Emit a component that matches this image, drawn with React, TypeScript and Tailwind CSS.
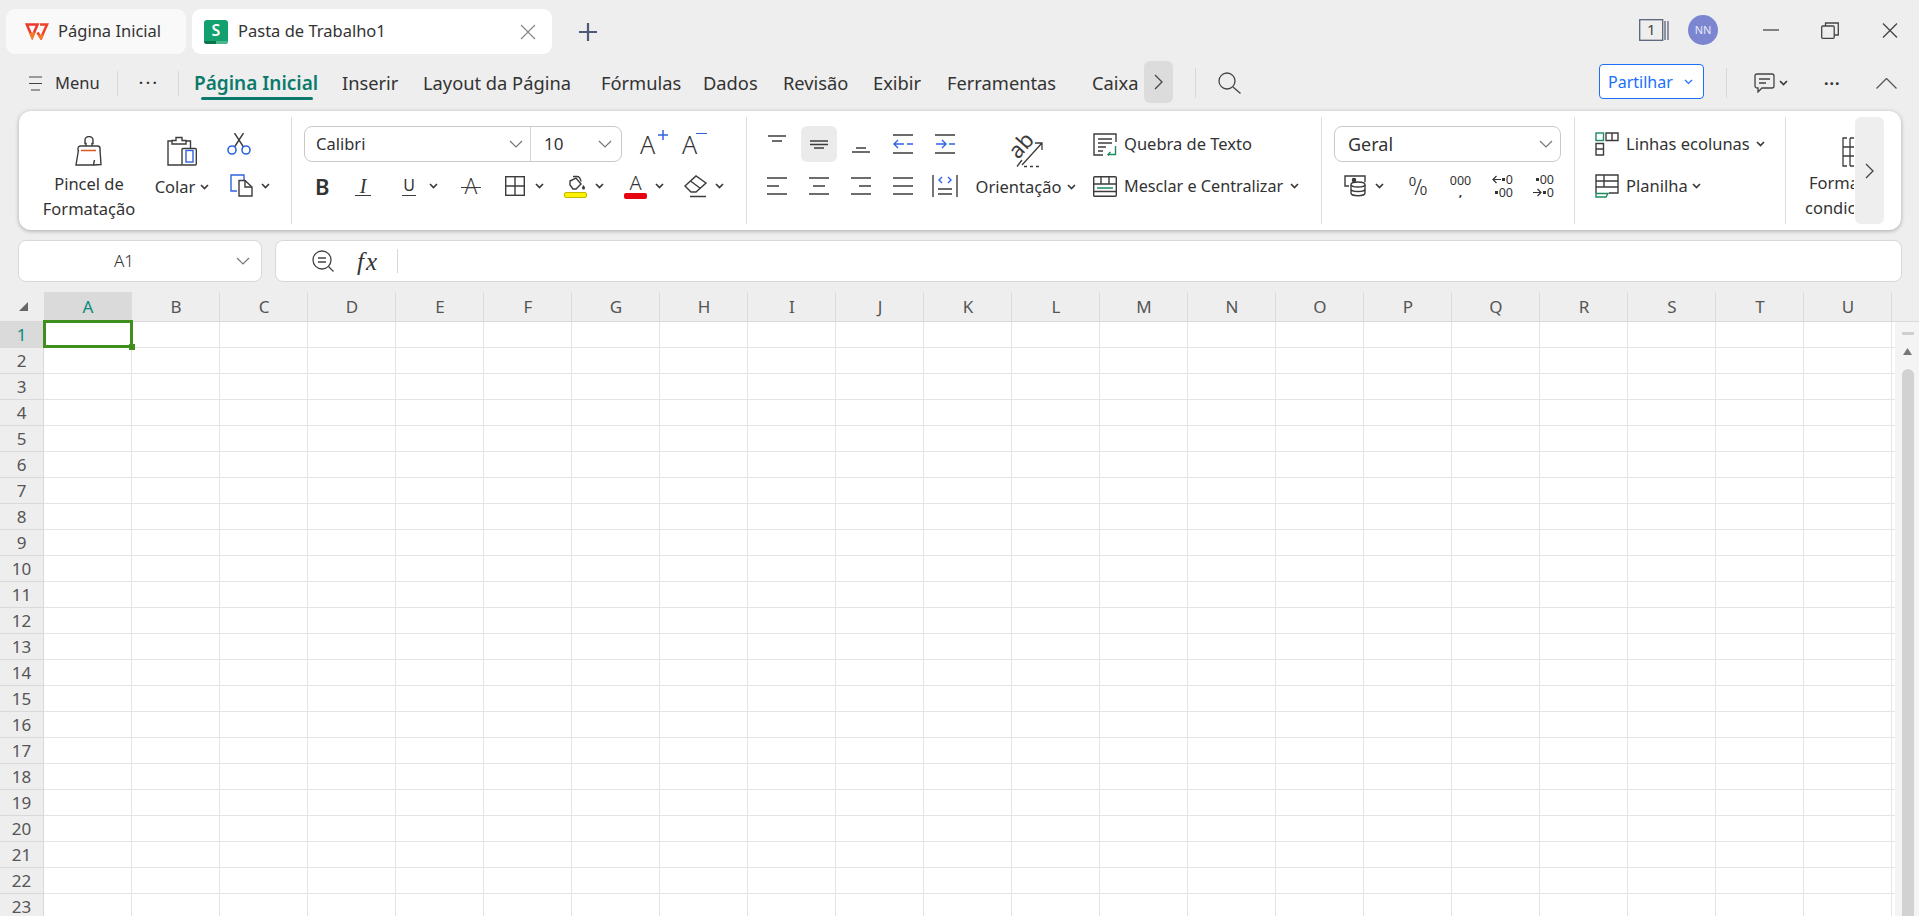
const COLS = "ABCDEFGHIJKLMNOPQRSTUV".split("");
const ROWS = Array.from({ length: 23 }, (_, i) => i + 1);

const TABS = [
  { label: "Página Inicial", w: "w-[148px]", active: true },
  { label: "Inserir", w: "w-[81px]" },
  { label: "Layout da Página", w: "w-[178px]" },
  { label: "Fórmulas", w: "w-[102px]" },
  { label: "Dados", w: "w-[80px]" },
  { label: "Revisão", w: "w-[90px]" },
  { label: "Exibir", w: "w-[74px]" },
  { label: "Ferramentas", w: "w-[145px]" },
  { label: "Caixa", w: "w-[50px]" },
];

const Caret = ({ className = "" }: { className?: string }) => (
  <svg width="9" height="6" viewBox="0 0 9 6" className={`shrink-0 ${className}`} fill="none">
    <path d="M1 1l3.5 3.5L8 1" stroke="#3a3a3a" strokeWidth="1.7" />
  </svg>
);

const ThinChevron = ({ className = "" }: { className?: string }) => (
  <svg width="14" height="8" viewBox="0 0 14 8" className={`shrink-0 ${className}`} fill="none">
    <path d="M1 1l6 6 6-6" stroke="#777" strokeWidth="1.2" />
  </svg>
);

const Sep = () => <div className="h-[107px] w-px shrink-0 bg-[#dedede]" />;

const Lines = ({ rows }: { rows: number[][] }) => (
  <svg width="20" height="20" viewBox="0 0 20 20" fill="none">
    {rows.map(([a, b, y]) => (
      <path key={`${a}${y}`} d={`M${a} ${y}H${b}`} stroke="#3c3c3c" strokeWidth="1.4" />
    ))}
  </svg>
);

const Slot = ({ children, on = false }: { children?: React.ReactNode; on?: boolean }) => (
  <div className={`flex h-[36px] w-[36px] items-center justify-center rounded-[6px] ${on ? "bg-[#ebebeb]" : ""}`}>
    {children}
  </div>
);

const Dot = () => <span className="mx-[1px] inline-block h-[3px] w-[3px] bg-[#333]" />;

const WpsLogo = () => (
  <svg width="24" height="17" viewBox="0 0 24 17" fill="none" strokeWidth="2.6" strokeLinejoin="miter">
    <path d="M1.800 1.500H12.500L7.200 14z" stroke="#ee3a2c" />
    <path d="M12.500 9.500l3.500 5.500 6-13.500h-7" stroke="#f0432a" />
    <path d="M5.500 10l1.700 4 2-4.500M14 12l2 3 1.500-3.500" stroke="#f77a22" />
  </svg>
);

const SheetLogo = () => (
  <div className="relative flex h-[24px] w-[24px] items-start justify-center overflow-hidden rounded-[3px] bg-[#12a06e]">
    <span className="text-[16px] font-semibold leading-[21px] text-white">S</span>
    <div className="absolute bottom-0 left-0 h-[3px] w-[12px] bg-[#0c7548]" />
    <div className="absolute bottom-0 right-0 h-[3px] w-[12px] bg-[#4ab78d]" />
  </div>
);

const BrushIcon = () => (
  <svg width="28" height="30" viewBox="0 0 28 30" fill="none" stroke="#3c3c3c" strokeWidth="1.4">
    <path d="M11 10V7.500H10V4a4 3.500 0 0 1 8 0v3.500h-1V10" />
    <path d="M3 14.500V12.500a2.500 2.500 0 0 1 2.500-2.500h17a2.500 2.500 0 0 1 2.500 2.500v2" />
    <path d="M6 14.500h15" stroke="#d9581f" strokeWidth="1.500" />
    <path d="M3.500 14L1 29h17.500l1-5" />
    <path d="M25 14l1 14.500-7.500.5" />
  </svg>
);

const PasteIcon = () => (
  <svg width="30" height="30" viewBox="0 0 30 30" fill="none" stroke="#3c3c3c" strokeWidth="1.4">
    <path d="M5 5H1v24h14" />
    <path d="M5 8V4.500h4V1.500h6v3h4V8z" />
    <path d="M19 5h4.500v7" />
    <rect x="15" y="12.500" width="14.300" height="16.500" rx="1" />
    <rect x="19" y="14.500" width="7" height="11.500" stroke="#2f63e0" />
  </svg>
);

const CutIcon = () => (
  <svg width="24" height="22" viewBox="0 0 24 22" fill="none" stroke="#3c3c3c" strokeWidth="1.4">
    <path d="M7.500 14L16.500 0M16.500 14L7.500 0" />
    <circle cx="5" cy="17" r="4" stroke="#2f63e0" strokeWidth="1.600" />
    <circle cx="19" cy="17" r="4" stroke="#2f63e0" strokeWidth="1.600" />
  </svg>
);

const CopyIcon = () => (
  <svg width="24" height="23" viewBox="0 0 24 23" fill="none" strokeWidth="1.4">
    <path d="M7 17H1V1h13v5" stroke="#2f63e0" />
    <path d="M9 6.500h6l7 6.500v9H9z" stroke="#3c3c3c" />
    <path d="M15 6.500V13h7" stroke="#3c3c3c" />
  </svg>
);

const BordersIcon = () => (
  <svg width="20" height="20" viewBox="0 0 20 20" fill="none" stroke="#3c3c3c" strokeWidth="1.4">
    <rect x="0.700" y="0.700" width="18.600" height="18.600" />
    <path d="M10 1v18M1 10h18" />
  </svg>
);

const FillIcon = () => (
  <div className="flex w-[23px] flex-col items-center">
    <svg width="20" height="16" viewBox="0 0 20 16" fill="none" stroke="#3c3c3c" strokeWidth="1.4">
      <path d="M4 6l6-3 5 6-5 5-3 0-3-4z" />
      <path d="M7 1.500h4c2 0 3.500 2 4 5" />
      <path d="M17.500 10c-1 1.500-1.500 2-1.500 3a1.500 1.500 0 0 0 3 0c0-1-.5-1.500-1.500-3z" fill="#3c3c3c" stroke="none" />
    </svg>
    <div className="mt-[1px] h-[6px] w-[23px] rounded-[2px] border border-[#c4b700] bg-[#fff200]" />
  </div>
);

const EraserIcon = () => (
  <svg width="24" height="23" viewBox="0 0 24 23" fill="none" stroke="#3c3c3c" strokeWidth="1.4">
    <path d="M1 11L12 1l10 7-10 9H7z" />
    <path d="M6.500 6l10 7.500" />
    <path d="M6 21.500h16" />
  </svg>
);

const OrientIcon = () => (
  <svg width="34" height="32" viewBox="0 0 34 32" fill="none" className="overflow-visible">
    <text fontSize="22" fill="#3c3c3c" transform="translate(9 25) rotate(-48)" fontFamily="Noto Sans">
      ab
    </text>
    <path d="M13 30L33 8M26 8h7v7" stroke="#3c3c3c" strokeWidth="1.300" />
    <path d="M8 31.500L13 25M15 31.500h3M21 31.500h3M27 31.500h3" stroke="#3c3c3c" strokeWidth="1.300" />
  </svg>
);

const WrapIcon = () => (
  <svg width="24" height="23" viewBox="0 0 24 23" fill="none" stroke="#3c3c3c" strokeWidth="1.4">
    <path d="M23 9V1H1v21h9" />
    <path d="M5 6h14M5 10h14M5 14h8M5 18h5" />
    <path d="M22.500 13v8.500H15M17.500 19L15 21.500l1 1" stroke="#1f8a5f" />
  </svg>
);

const MergeIcon = () => (
  <svg width="24" height="21" viewBox="0 0 24 21" fill="none" stroke="#3c3c3c" strokeWidth="1.4">
    <rect x="0.700" y="0.700" width="22.600" height="19.600" rx="1" />
    <path d="M1 8h22M8 1v7M16 1v7M1 15.500h22" />
    <path d="M4 12h16" stroke="#1f8a5f" strokeWidth="1.500" />
  </svg>
);

const MoneyIcon = () => (
  <svg width="22" height="22" viewBox="0 0 22 22" fill="none" stroke="#3c3c3c" strokeWidth="1.4">
    <path d="M5 11H1V1h20v6" />
    <circle cx="10" cy="5" r="1.600" fill="#3c3c3c" />
    <ellipse cx="14" cy="9.500" rx="7" ry="2.500" />
    <path d="M7 10v8c0 1.500 3 2.800 7 2.800s7-1.300 7-2.800v-8M7 14c0 1.500 3 2.500 7 2.500s7-1 7-2.500" />
  </svg>
);

const RowsIcon = () => (
  <svg width="24" height="24" viewBox="0 0 24 24" fill="none" stroke="#3c3c3c" strokeWidth="1.4">
    <rect x="1" y="1" width="7.500" height="7.500" stroke="#1f8a5f" />
    <path d="M11 1h12v7.500H11zM17 1v7.500" />
    <path d="M1 11.500h7.500V23H1zM1 17h7.500" />
  </svg>
);

const SheetIcon = () => (
  <svg width="24" height="24" viewBox="0 0 24 24" fill="none" stroke="#3c3c3c" strokeWidth="1.4">
    <path d="M1 19V1h22v18h-9" />
    <path d="M1 7h22M9 1v12M1 13h22" />
    <path d="M1 19.500h12l-2 3.500H1z" stroke="#1f8a5f" />
  </svg>
);

const CondIcon = () => (
  <svg width="24" height="30" viewBox="0 0 24 30" fill="none" stroke="#3c3c3c" strokeWidth="1.300">
    <path d="M5 1H1v28h4M8 1v28M8 1h4M8 29h4M1 10h11M1 19h11" />
  </svg>
);

const Cells = () => (
  <>
    {COLS.map((c) => (
      <div key={c} className="h-full w-[88px] shrink-0 border-r border-b border-[#e4e4e4]" />
    ))}
  </>
);

export default function App() {
  return (
    <div className="flex h-screen w-full flex-col overflow-hidden bg-[#eeeeee] font-['Noto_Sans',sans-serif] text-[16.5px] text-[#333]">
      {/* title bar */}
      <div className="flex h-[60px] shrink-0 pt-[9px]">
        <div className="ml-[6px] flex h-[45px] w-[180px] items-center rounded-[9px] bg-[#f9f9f9] pl-[19px]">
          <WpsLogo />
          <span className="ml-[9px]">Página Inicial</span>
        </div>
        <div className="ml-[6px] flex h-[45px] w-[360px] items-center rounded-[9px] bg-white pl-[12px]">
          <SheetLogo />
          <span className="ml-[10px]">Pasta de Trabalho1</span>
          <svg width="16" height="16" viewBox="0 0 16 16" className="ml-auto mr-[16px]" fill="none" stroke="#888" strokeWidth="1.2">
            <path d="M1 1l14 14M15 1L1 15" />
          </svg>
        </div>
        <svg width="20" height="20" viewBox="0 0 20 20" className="ml-[26px] mt-[13px]" fill="none" stroke="#4b5a78" strokeWidth="2.2">
          <path d="M10 1v18M1 10h18" />
        </svg>
        <div className="ml-auto flex h-[45px] items-start">
          <svg width="30" height="22" viewBox="0 0 30 22" className="mt-[10px]" fill="none" stroke="#5a6478" strokeWidth="1.3">
            <rect x="0.700" y="0.700" width="23" height="20.600" />
            <path d="M26 2v19M29 2v19" />
            <text x="8" y="16" fontSize="15" fill="#444" stroke="none" fontFamily="Noto Sans">
              1
            </text>
          </svg>
          <div className="ml-[19px] mt-[6px] flex h-[30px] w-[30px] items-center justify-center rounded-full bg-[#7c86d0] text-[11px] text-[#e6e8f8]">
            NN
          </div>
          <svg width="16" height="2" viewBox="0 0 16 2" className="ml-[45px] mt-[19.500px]" stroke="#444" strokeWidth="1.300">
            <path d="M0 1h16" />
          </svg>
          <svg width="18" height="17" viewBox="0 0 18 17" className="ml-[42px] mt-[13px]" fill="none" stroke="#444" strokeWidth="1.300">
            <rect x="0.700" y="4" width="12.500" height="12.300" rx="1" />
            <path d="M4.500 4V1h12.800v12H13" />
          </svg>
          <svg width="16" height="15" viewBox="0 0 16 15" className="ml-[43px] mr-[21px] mt-[14px]" fill="none" stroke="#444" strokeWidth="1.300">
            <path d="M1 0.500l14 14M15 0.500l-14 14" />
          </svg>
        </div>
      </div>

      {/* tab bar */}
      <div className="mb-[5px] flex h-[46px] shrink-0 items-center">
        <svg width="13" height="15" viewBox="0 0 13 15" className="ml-[29px]" fill="none" stroke="#444" strokeWidth="1.200">
          <path d="M0 1h13M0 7.500h13M2 14h9" />
        </svg>
        <span className="ml-[13px] w-[62px]">Menu</span>
        <div className="h-[25px] w-px bg-[#d8d8d8]" />
        <span className="ml-[21px] w-[39px] text-[14px] font-bold leading-none tracking-[3px]">···</span>
        <div className="h-[25px] w-px bg-[#d8d8d8]" />
        <div className="ml-[15px] flex items-center">
          {TABS.map((t) => (
            <div key={t.label} className={`relative shrink-0 whitespace-nowrap ${t.w}`}>
              <span className={t.active ? "text-[19px] font-semibold text-[#0b7a6c]" : "text-[18.300px]"}>{t.label}</span>
              {t.active && <div className="absolute left-[7px] top-[28px] h-[3px] w-[112px] rounded-full bg-[#0b7a6c]" />}
            </div>
          ))}
        </div>
        <div className="-mt-[2px] ml-[2px] flex h-[42px] w-[29px] items-center justify-center rounded-[6px] bg-[#dcdcdc]">
          <svg width="9" height="16" viewBox="0 0 9 16" fill="none" stroke="#444" strokeWidth="1.300">
            <path d="M1 1l7 7-7 7" />
          </svg>
        </div>
        <div className="ml-[22px] h-[30px] w-px bg-[#d8d8d8]" />
        <svg width="23" height="22" viewBox="0 0 23 22" className="ml-[22px]" fill="none" stroke="#444" strokeWidth="1.300">
          <circle cx="9" cy="9" r="8" />
          <path d="M15 15l7.500 6.500" />
        </svg>
        <div className="ml-auto flex items-center">
          <div className="-mt-[3px] flex h-[35px] w-[105px] items-center rounded-[4px] border border-[#1a6fff] bg-white pl-[8px] text-[16px] text-[#1a6fff]">
            <span>Partilhar</span>
            <svg width="9" height="6" viewBox="0 0 9 6" className="ml-[11px]" fill="none" stroke="#1a6fff" strokeWidth="1.200">
              <path d="M1 1l3.500 3.500L8 1" />
            </svg>
          </div>
          <div className="ml-[22px] h-[30px] w-px bg-[#d8d8d8]" />
          <svg width="21" height="20" viewBox="0 0 21 20" className="ml-[27px]" fill="none" stroke="#444" strokeWidth="1.300">
            <path d="M3 1h15a2 2 0 0 1 2 2v10a2 2 0 0 1-2 2H8l-4 4v-4H3a2 2 0 0 1-2-2V3a2 2 0 0 1 2-2z" />
            <path d="M5 6h11M5 10h7" />
          </svg>
          <Caret className="ml-[4px]" />
          <span className="ml-[36px] w-[19px] whitespace-nowrap text-[16px] font-bold leading-none tracking-[1px]">···</span>
          <svg width="21" height="11" viewBox="0 0 21 11" className="ml-[33px] mr-[22px]" fill="none" stroke="#555" strokeWidth="1.300">
            <path d="M0.500 10.500l10-10 10 10" />
          </svg>
        </div>
      </div>

      {/* ribbon */}
      <div className="relative ml-[19px] mr-[18px] flex h-[119px] shrink-0 overflow-hidden rounded-[12px] bg-white pt-[6px] shadow-[0_1px_4px_rgba(0,0,0,0.3)]">
        {/* clipboard */}
        <div className="flex h-[107px] w-[272px] shrink-0">
          <div className="ml-[21px] flex w-[98px] flex-col items-center pt-[19px]">
            <BrushIcon />
            <span className="mt-[5px] whitespace-nowrap leading-[25px]">Pincel de</span>
            <span className="whitespace-nowrap leading-[25px]">Formatação</span>
          </div>
          <div className="ml-[12px] flex w-[64px] flex-col items-center pt-[19px]">
            <PasteIcon />
            <div className="mt-[8px] flex items-center gap-[5px] leading-[25px]">
              Colar <Caret />
            </div>
          </div>
          <div className="ml-[13px] w-[44px] pt-[16px]">
            <CutIcon />
            <div className="ml-[3px] mt-[19px] flex items-center gap-[7px]">
              <CopyIcon />
              <Caret />
            </div>
          </div>
        </div>
        <Sep />

        {/* font */}
        <div className="h-[107px] w-[454px] shrink-0 pt-[9px]">
          <div className="flex h-[36px] items-center">
            <div className="ml-[12px] flex h-[36px] w-[318px] rounded-[8px] border border-[#c9c9c9]">
              <div className="flex w-[226px] items-center border-r border-[#d5d5d5] pl-[11px] pr-[7px]">
                Calibri
                <ThinChevron className="ml-auto" />
              </div>
              <div className="flex flex-1 items-center pl-[13px] pr-[9px] text-[17px]">
                10
                <ThinChevron className="ml-auto" />
              </div>
            </div>
            <div className="relative ml-[18px] w-[22px] text-[25px] font-light leading-none">
              A
              <svg width="10" height="10" viewBox="0 0 10 10" className="absolute -right-[6px] -top-[2px]" stroke="#2f63e0" strokeWidth="1.500">
                <path d="M5 0v10M0 5h10" />
              </svg>
            </div>
            <div className="relative ml-[20px] w-[22px] text-[25px] font-light leading-none">
              A
              <div className="absolute -right-[3px] top-[1px] h-[1.500px] w-[11px] bg-[#2f63e0]" />
            </div>
          </div>
          <div className="mt-[6px] flex h-[36px] items-center">
            <span className="ml-[23px] w-[14px] text-center text-[22px] font-semibold leading-none">B</span>
            <span className="ml-[26px] w-[16px] border-b border-[#3c3c3c] text-center font-['Liberation_Serif',serif] text-[20px] italic leading-[18px]">I</span>
            <span className="ml-[31px] w-[14px] border-b border-[#3c3c3c] text-center text-[16px] leading-[19px]">U</span>
            <Caret className="ml-[13px]" />
            <span className="relative ml-[23px] w-[20px] text-center text-[21px] font-light leading-none">
              A
              <span className="absolute left-0 top-[11px] h-px w-[20px] bg-[#3c3c3c]" />
            </span>
            <span className="ml-[24px] w-[20px]">
              <BordersIcon />
            </span>
            <Caret className="ml-[10px]" />
            <span className="ml-[20px] w-[23px]">
              <FillIcon />
            </span>
            <Caret className="ml-[8px]" />
            <div className="ml-[20px] flex w-[23px] flex-col items-center">
              <span className="text-[20px] font-light leading-[18px]">A</span>
              <div className="mt-[1px] h-[6px] w-[23px] rounded-[2px] bg-[#e8040f]" />
            </div>
            <Caret className="ml-[8px]" />
            <span className="ml-[20px] w-[23px]">
              <EraserIcon />
            </span>
            <Caret className="ml-[8px]" />
          </div>
        </div>
        <Sep />

        {/* alignment */}
        <div className="flex h-[107px] w-[574px] shrink-0">
          <div className="ml-[12px] grid w-[204px] shrink-0 grid-cols-5 content-start gap-[6px] pt-[9px]">
            <Slot>
              <Lines rows={[[1, 19, 2], [5, 15, 7]]} />
            </Slot>
            <Slot on>
              <Lines rows={[[1, 19, 7], [1, 19, 10.5], [5, 15, 14]]} />
            </Slot>
            <Slot>
              <Lines rows={[[5, 15, 14], [1, 19, 18]]} />
            </Slot>
            <Slot>
              <svg width="20" height="20" viewBox="0 0 20 20" fill="none" stroke="#3c3c3c" strokeWidth="1.4">
                <path d="M0 1h20M0 19h20" />
                <path d="M1 10h10M5 6l-4 4 4 4M14 10h6" stroke="#2f63e0" />
              </svg>
            </Slot>
            <Slot>
              <svg width="20" height="20" viewBox="0 0 20 20" fill="none" stroke="#3c3c3c" strokeWidth="1.4">
                <path d="M0 1h20M0 19h20" />
                <path d="M1 10h10M7 6l4 4-4 4M14 10h6" stroke="#2f63e0" />
              </svg>
            </Slot>
            <Slot>
              <Lines rows={[[0, 20, 2], [0, 12, 10], [0, 20, 18]]} />
            </Slot>
            <Slot>
              <Lines rows={[[0, 20, 2], [4, 16, 10], [0, 20, 18]]} />
            </Slot>
            <Slot>
              <Lines rows={[[0, 20, 2], [8, 20, 10], [0, 20, 18]]} />
            </Slot>
            <Slot>
              <Lines rows={[[0, 20, 2], [0, 20, 10], [0, 20, 18]]} />
            </Slot>
            <Slot>
              <svg width="26" height="22" viewBox="0 0 26 22" fill="none" stroke="#3c3c3c" strokeWidth="1.4">
                <path d="M1 0v22M25 0v22M6 14h14M6 19h14" />
                <path d="M10 2L7 5l3 3M16 2l3 3-3 3" stroke="#2f63e0" />
              </svg>
            </Slot>
          </div>
          <div className="ml-[7px] flex w-[112px] shrink-0 flex-col items-center pt-[18px]">
            <OrientIcon />
            <div className="mt-[7px] flex items-center gap-[6px] whitespace-nowrap leading-[25px]">
              Orientação <Caret />
            </div>
          </div>
          <div className="ml-[11px] pt-[9px]">
            <div className="flex h-[36px] items-center gap-[7px] whitespace-nowrap">
              <WrapIcon />
              Quebra de Texto
            </div>
            <div className="mt-[6px] flex h-[36px] items-center gap-[7px] whitespace-nowrap text-[16.200px]">
              <MergeIcon />
              Mesclar e Centralizar
              <Caret />
            </div>
          </div>
        </div>
        <Sep />

        {/* number */}
        <div className="h-[107px] w-[252px] shrink-0 pt-[9px]">
          <div className="ml-[12px] flex h-[36px] w-[227px] items-center rounded-[8px] border border-[#c9c9c9] pl-[13px] pr-[7px] text-[18px]">
            Geral
            <ThinChevron className="ml-auto" />
          </div>
          <div className="mt-[6px] flex h-[36px] items-center">
            <span className="ml-[22px] w-[22px]">
              <MoneyIcon />
            </span>
            <Caret className="ml-[9px]" />
            <div className="ml-[25px] flex h-[22px] w-[18px] justify-center leading-none">
              <span className="self-start text-[13px]">0</span>
              <span className="-mx-[2px] text-[22px] font-light">/</span>
              <span className="self-end text-[13px]">0</span>
            </div>
            <div className="ml-[23px] flex w-[21px] flex-col items-center text-[12.500px] leading-[11px]">
              <span>000</span>
              <span className="font-bold">,</span>
            </div>
            <div className="ml-[20px] flex w-[22px] flex-col items-end text-[12.500px] leading-[13px]">
              <span className="flex items-center">
                <svg width="9" height="9" viewBox="0 0 9 9" fill="none" stroke="#333" strokeWidth="1.200">
                  <path d="M9 4.500H1M4.500 1L1 4.500 4.500 8" />
                </svg>
                <Dot />0
              </span>
              <span className="flex items-center">
                <Dot />00
              </span>
            </div>
            <div className="ml-[20px] flex w-[21px] flex-col items-end text-[12.500px] leading-[13px]">
              <span className="flex items-center">
                <Dot />00
              </span>
              <span className="flex items-center">
                <svg width="9" height="9" viewBox="0 0 9 9" fill="none" stroke="#333" strokeWidth="1.200">
                  <path d="M0 4.500h8M4.500 1L8 4.500 4.500 8" />
                </svg>
                <Dot />0
              </span>
            </div>
          </div>
        </div>
        <Sep />

        {/* rows and sheet */}
        <div className="h-[107px] w-[210px] shrink-0 pt-[9px]">
          <div className="ml-[20px] flex h-[36px] items-center whitespace-nowrap">
            <RowsIcon />
            <span className="ml-[7px] w-[122px]">Linhas ecolunas</span>
            <Caret className="ml-[8px]" />
          </div>
          <div className="ml-[20px] mt-[6px] flex h-[36px] items-center whitespace-nowrap">
            <SheetIcon />
            <span className="ml-[7px] w-[58px]">Planilha</span>
            <Caret className="ml-[8px]" />
          </div>
        </div>
        <Sep />

        {/* conditional formatting, cut off by the scroller */}
        <div className="h-[107px] w-[68px] shrink-0 overflow-hidden whitespace-nowrap pt-[20px]">
          <div className="ml-[56px]">
            <CondIcon />
          </div>
          <div className="ml-[23px] mt-[3px] leading-[25px]">Formatação</div>
          <div className="ml-[19px] leading-[25px]">condicional</div>
        </div>

        <div className="absolute right-[17px] top-[6px] flex h-[107px] w-[29px] items-center justify-center rounded-[6px] bg-[#eeeeee]">
          <svg width="10" height="16" viewBox="0 0 10 16" fill="none" stroke="#444" strokeWidth="1.300">
            <path d="M1 1l7 7-7 7" />
          </svg>
        </div>
      </div>

      {/* formula bar */}
      <div className="ml-[18px] mr-[17px] mt-[10px] flex h-[42px] shrink-0 gap-[13px]">
        <div className="flex w-[244px] items-center rounded-[8px] border border-[#d8d8d8] bg-white pr-[11px]">
          <span className="ml-[95px] text-[17px] font-light">A1</span>
          <ThinChevron className="ml-auto" />
        </div>
        <div className="flex flex-1 items-center rounded-[8px] border border-[#d8d8d8] bg-white">
          <svg width="22" height="22" viewBox="0 0 22 22" className="ml-[36px]" fill="none" stroke="#444" strokeWidth="1.300">
            <circle cx="10" cy="10" r="9" />
            <path d="M6 8h8M6 12h8M16.500 16.500l5 5" />
          </svg>
          <span className="ml-[23px] font-['Liberation_Serif',serif] text-[25px] italic leading-none tracking-[2px]">fx</span>
          <div className="ml-[18px] h-[24px] w-px bg-[#d8d8d8]" />
        </div>
      </div>

      {/* sheet */}
      <div className="mt-[10px] flex min-h-0 flex-1 flex-col">
        <div className="flex h-[30px] shrink-0 border-b border-[#d9d9d9] text-[17px] text-[#555]">
          <div className="flex w-[44px] shrink-0 items-center justify-center">
            <svg width="9" height="9" viewBox="0 0 9 9" className="ml-[2px]">
              <path d="M9 0v9H0z" fill="#666" />
            </svg>
          </div>
          {COLS.slice(0, 21).map((c, i) => (
            <div
              key={c}
              className={`flex w-[88px] shrink-0 items-center justify-center border-r border-[#dcdcdc] pl-[1px] ${i === 0 ? "bg-[#dadada] text-[#0a8a7c]" : ""}`}
            >
              {c}
            </div>
          ))}
        </div>
        <div className="flex min-h-0 flex-1">
          <div className="relative min-w-0 flex-1">
            <div className="h-full overflow-hidden bg-white">
              {ROWS.map((r) => (
                <div key={r} className="flex h-[26px]">
                  <div
                    className={`flex w-[44px] shrink-0 items-center justify-center border-r border-b border-[#d9d9d9] text-[17px] ${r === 1 ? "bg-[#dadada] text-[#0a8a7c]" : "bg-[#eeeeee] text-[#555]"}`}
                  >
                    {r}
                  </div>
                  <Cells />
                </div>
              ))}
            </div>
            <div className="absolute -top-[2px] left-[43px] h-[28px] w-[90px] border-[3px] border-[#3f8f1f]">
              <div className="absolute -bottom-[5px] -right-[5px] h-[6px] w-[6px] bg-[#3f8f1f]" />
            </div>
          </div>
          <div className="flex w-[24px] shrink-0 flex-col items-center bg-[#f4f4f4] pl-[1px] pt-[10px]">
            <div className="h-[3px] w-[12px] bg-[#cfcfcf]" />
            <svg width="9" height="7" viewBox="0 0 9 7" className="mt-[13px]">
              <path d="M4.500 0L9 7H0z" fill="#777" />
            </svg>
            <div className="mt-[14px] w-[12px] flex-1 rounded-t-full bg-[#d2d2d2]" />
          </div>
        </div>
      </div>
    </div>
  );
}
